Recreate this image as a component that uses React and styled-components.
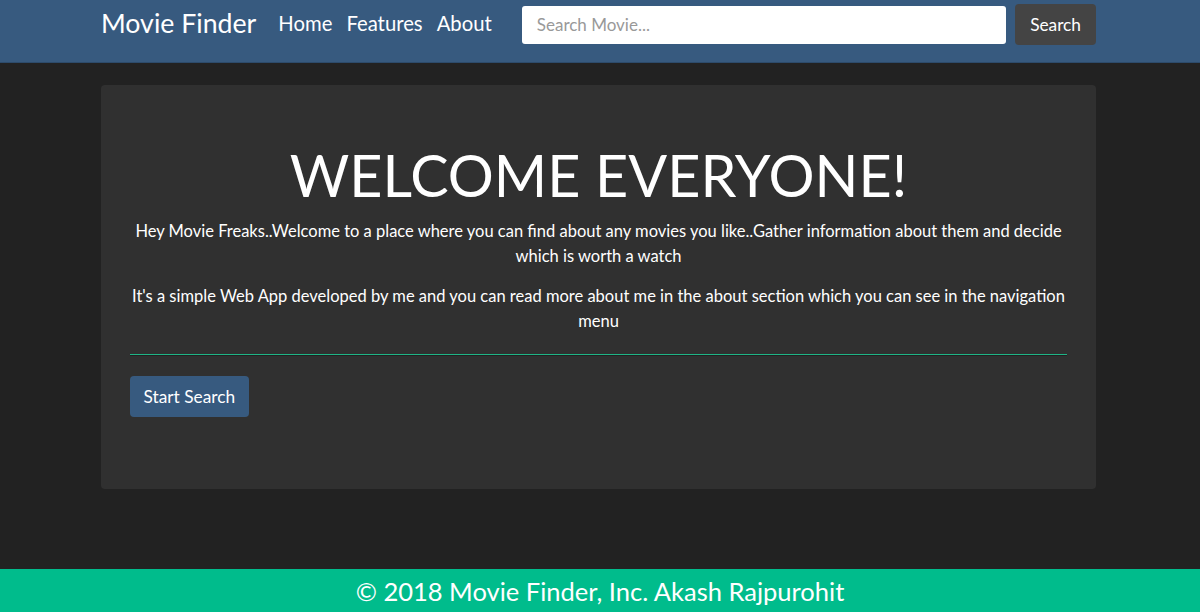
import React from "react"
import styled, { createGlobalStyle } from "styled-components"

const WIDTH = 995;

const Global = createGlobalStyle`
  html, body {
    margin: 0;
    padding: 0;
    background: #222;
    font-family: Lato, "Open Sans", Arial, sans-serif;
    color: #fff;
  }
`;

const Page = styled.div`
  min-height: 100vh;
  display: flex;
  flex-direction: column;
`;

const Navbar = styled.nav`
  background: #375a7f;
  border-bottom: 1px solid #2d4b6b;
  padding: 4px 0 17px;
`;
const NavInner = styled.div`
  width: ${WIDTH}px;
  margin-left: calc(50% - ${WIDTH / 2 + 1.5}px);
  display: flex;
  align-items: center;
  height: 41px;
`;
const Brand = styled.a`
  font-size: 26.7px;
  color: #fff;
  text-decoration: none;
  margin: 0 22px 4px 0;
  white-space: nowrap;
`;
const NavLinks = styled.div`
  display: flex;
  gap: 14px;
  margin-bottom: 4px;
`;
const NavLink = styled.a`
  font-size: 20.3px;
  color: #fff;
  text-decoration: none;
`;
const SearchForm = styled.form`
  flex: 1;
  display: flex;
  align-items: center;
  gap: 9px;
  margin-left: 30px;
`;
const SearchInput = styled.input`
  flex: 1;
  height: 38px;
  box-sizing: border-box;
  border: none;
  border-radius: 3px;
  padding: 0 15px;
  font-family: inherit;
  font-size: 17px;
  color: #444;
  background: #fff;
  outline: none;
  &::placeholder {
    color: #999;
  }
`;
const Button = styled.button`
  height: 41px;
  box-sizing: border-box;
  border: none;
  border-radius: 4px;
  padding: 0 ${p => p.pad || 15}px;
  font-family: inherit;
  font-size: 17.3px;
  color: #fff;
  background: ${p => p.bg || "#444"};
  cursor: pointer;
`;

const Main = styled.main`
  flex: 1;
  padding-top: 22px;
`;
const Jumbotron = styled.section`
  width: ${WIDTH}px;
  margin-left: calc(50% - ${WIDTH / 2 + 1.5}px);
  box-sizing: border-box;
  background: #303030;
  border-radius: 4px;
  padding: 56px 29px 72px;
`;
const Title = styled.h1`
  margin: 0 0 10px;
  font-size: 57.5px;
  font-weight: 400;
  line-height: 68px;
  text-align: center;
`;
const Lead = styled.p`
  margin: 0 0 15px;
  font-size: 16.5px;
  line-height: 25px;
  text-align: center;
`;
const Rule = styled.hr`
  margin: 20px 0 21px;
  height: 0;
  border: none;
  border-top: 1px solid #1fb486;
  box-shadow: 0 1px 0 rgba(0, 0, 0, 0.3);
`;

const Footer = styled.footer`
  background: #00bc8c;
  height: 43px;
  display: flex;
  align-items: center;
  justify-content: center;
  font-size: 25.5px;
  color: #fff;
`;

export default function App() {
  return (
    <Page>
      <Global />
      <Navbar>
        <NavInner>
          <Brand href="#">Movie Finder</Brand>
          <NavLinks>
            <NavLink href="#">Home</NavLink>
            <NavLink href="#">Features</NavLink>
            <NavLink href="#">About</NavLink>
          </NavLinks>
          <SearchForm onSubmit={e => e.preventDefault()}>
            <SearchInput placeholder="Search Movie..." />
            <Button type="submit">Search</Button>
          </SearchForm>
        </NavInner>
      </Navbar>
      <Main>
        <Jumbotron>
          <Title>WELCOME EVERYONE!</Title>
          <Lead>
            Hey Movie Freaks..Welcome to a place where you can find about any movies you like..Gather information about them and decide which is worth a watch
          </Lead>
          <Lead>
            It's a simple Web App developed by me and you can read more about me in the about section which you can see in the navigation menu
          </Lead>
          <Rule />
          <Button bg="#375a7f" pad={13.5}>Start Search</Button>
        </Jumbotron>
      </Main>
      <Footer>© 2018 Movie Finder, Inc. Akash Rajpurohit</Footer>
    </Page>
  )
}
